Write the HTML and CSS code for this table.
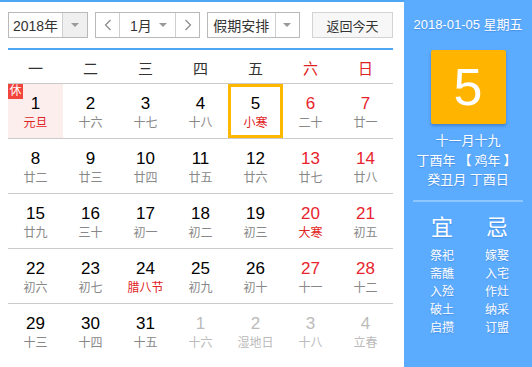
FILE: index.html
```html
<!DOCTYPE html>
<html lang="zh">
<head>
<meta charset="utf-8">
<link rel="stylesheet" href="styles.css">
</head>
<body>
<div class="app">
  <div class="main">
    <div class="toolbar">
      <div class="sel year">
        <span class="sel-text">2018年</span>
        <span class="sel-arrow gray"><i class="tri"></i></span>
      </div>
      <div class="sel month">
        <span class="nav"><svg width="8" height="12" viewBox="0 0 8 12"><polyline points="6.5,1 1.5,6 6.5,11" fill="none" stroke="#888" stroke-width="1.2"/></svg></span>
        <span class="month-mid"><span class="m-text">1月</span><i class="tri"></i></span>
        <span class="nav"><svg width="8" height="12" viewBox="0 0 8 12"><polyline points="1.5,1 6.5,6 1.5,11" fill="none" stroke="#888" stroke-width="1.2"/></svg></span>
      </div>
      <div class="sel holiday">
        <span class="sel-text">假期安排</span>
        <span class="sel-arrow"><i class="tri"></i></span>
      </div>
      <div class="btn">返回今天</div>
    </div>
    <div class="weekdays">
      <span>一</span><span>二</span><span>三</span><span>四</span><span>五</span><span class="red">六</span><span class="red">日</span>
    </div>
    <div class="grid">
      <div class="row">
        <div class="cell rest"><span class="badge">休</span><b>1</b><em class="fest">元旦</em></div>
        <div class="cell"><b>2</b><em>十六</em></div>
        <div class="cell"><b>3</b><em>十七</em></div>
        <div class="cell"><b>4</b><em>十八</em></div>
        <div class="cell today"><b>5</b><em class="fest">小寒</em></div>
        <div class="cell wk"><b>6</b><em>二十</em></div>
        <div class="cell wk"><b>7</b><em>廿一</em></div>
      </div>
      <div class="row">
        <div class="cell"><b>8</b><em>廿二</em></div>
        <div class="cell"><b>9</b><em>廿三</em></div>
        <div class="cell"><b>10</b><em>廿四</em></div>
        <div class="cell"><b>11</b><em>廿五</em></div>
        <div class="cell"><b>12</b><em>廿六</em></div>
        <div class="cell wk"><b>13</b><em>廿七</em></div>
        <div class="cell wk"><b>14</b><em>廿八</em></div>
      </div>
      <div class="row">
        <div class="cell"><b>15</b><em>廿九</em></div>
        <div class="cell"><b>16</b><em>三十</em></div>
        <div class="cell"><b>17</b><em>初一</em></div>
        <div class="cell"><b>18</b><em>初二</em></div>
        <div class="cell"><b>19</b><em>初三</em></div>
        <div class="cell wk"><b>20</b><em class="fest">大寒</em></div>
        <div class="cell wk"><b>21</b><em>初五</em></div>
      </div>
      <div class="row">
        <div class="cell"><b>22</b><em>初六</em></div>
        <div class="cell"><b>23</b><em>初七</em></div>
        <div class="cell"><b>24</b><em class="fest">腊八节</em></div>
        <div class="cell"><b>25</b><em>初九</em></div>
        <div class="cell"><b>26</b><em>初十</em></div>
        <div class="cell wk"><b>27</b><em>十一</em></div>
        <div class="cell wk"><b>28</b><em>十二</em></div>
      </div>
      <div class="row last">
        <div class="cell"><b>29</b><em>十三</em></div>
        <div class="cell"><b>30</b><em>十四</em></div>
        <div class="cell"><b>31</b><em>十五</em></div>
        <div class="cell other"><b>1</b><em>十六</em></div>
        <div class="cell other"><b>2</b><em>湿地日</em></div>
        <div class="cell other"><b>3</b><em>十八</em></div>
        <div class="cell other"><b>4</b><em>立春</em></div>
      </div>
    </div>
  </div>
  <div class="side">
    <div class="side-date">2018-01-05 星期五</div>
    <div class="big-day">5</div>
    <div class="lunar">
      <div>十一月十九</div>
      <div>丁酉年<span class="br">【</span>鸡年<span class="br">】</span></div>
      <div>癸丑月 丁酉日</div>
    </div>
    <div class="sep"></div>
    <div class="yj">
      <div class="yj-col">
        <div class="yj-title">宜</div>
        <div>祭祀</div><div>斋醮</div><div>入殓</div><div>破土</div><div>启攒</div>
      </div>
      <div class="yj-col">
        <div class="yj-title">忌</div>
        <div>嫁娶</div><div>入宅</div><div>作灶</div><div>纳采</div><div>订盟</div>
      </div>
    </div>
  </div>
</div>
</body>
</html>
```

FILE: styles.css
```css
* { box-sizing: border-box; margin: 0; padding: 0; }
html, body { background: #fff; }
body {
  font-family: "Liberation Sans", Arial, "Noto Sans CJK SC", sans-serif;
  color: #333;
  width: 532px;
  height: 367px;
  overflow: hidden;
}
.app {
  display: flex;
  height: 367px;
}
.main {
  width: 404px;
  border-top: 2px solid #4ea6f5;
  padding: 10px 11px 0 8px;
}
.toolbar {
  display: flex;
  align-items: stretch;
  height: 26px;
}
.sel {
  display: flex;
  border: 1px solid #b9b9b9;
  background: #fff;
  font-size: 13px;
  color: #333;
}
.sel-text {
  display: flex;
  align-items: center;
  justify-content: center;
  border-right: 1px solid #cfcfcf;
}
.sel-arrow {
  display: flex;
  align-items: center;
  justify-content: center;
  width: 24px;
}
.sel-arrow.gray { background: #efefef; }
.tri {
  display: block;
  width: 0;
  height: 0;
  border-left: 4px solid transparent;
  border-right: 4px solid transparent;
  border-top: 4px solid #999;
}
.year { width: 80px; font-size: 14px; }
.year .sel-text { width: 54px; }
.month { width: 105px; margin-left: 7px; }
.nav {
  width: 23px;
  display: flex;
  align-items: center;
  justify-content: center;
}
.month-mid {
  flex: 1;
  display: flex;
  align-items: center;
  justify-content: space-between;
  padding: 0 8px 0 10px;
  border-left: 1px solid #cfcfcf;
  border-right: 1px solid #cfcfcf;
  font-size: 14px;
}
.holiday { width: 93px; margin-left: 7px; font-size: 14px; }
.holiday .sel-text { width: 69px; }
.btn {
  width: 81px;
  margin-left: 12px;
  border: 1px solid #d3d3d3;
  background: #f7f7f7;
  display: flex;
  align-items: center;
  justify-content: center;
  font-size: 13px;
  color: #333;
}
.weekdays {
  margin-top: 10px;
  border-top: 2px solid #4ea6f5;
  border-bottom: 1px solid #cbcbcb;
  height: 36px;
  display: grid;
  grid-template-columns: repeat(7, 55px);
  align-items: center;
  font-size: 15px;
  color: #333;
}
.weekdays span { text-align: center; padding-top: 1px; }
.red { color: #e02424; }
.grid { display: flex; flex-direction: column; }
.row {
  display: grid;
  grid-template-columns: repeat(7, 55px);
  border-bottom: 1px solid #cbcbcb;
}
.row.last { border-bottom: none; }
.cell {
  position: relative;
  height: 54px;
  padding-top: 10px;
  display: flex;
  flex-direction: column;
  align-items: center;
}
.cell b {
  font-weight: normal;
  font-size: 17px;
  line-height: 20px;
  color: #000;
}
.cell em {
  font-style: normal;
  font-size: 12px;
  line-height: 19px;
  color: #888;
}
.cell.wk b { color: #e8242e; }
.cell em.fest { color: #e02424; }
.cell.other b, .cell.other em { color: #bbb; }
.cell.rest { background: #fdeeee; }
.badge {
  position: absolute;
  left: 0;
  top: 0;
  width: 15px;
  height: 15px;
  background: #f2453d;
  color: #fff;
  font-size: 12px;
  line-height: 15px;
  text-align: center;
}
.cell.today {
  border: 3px solid #ffb800;
  padding-top: 7px;
}
.side {
  width: 128px;
  height: 367px;
  background: #5babff;
  color: #fff;
  display: flex;
  flex-direction: column;
  align-items: center;
  text-shadow: 0 1px 1px rgba(20, 70, 140, 0.25);
}
.side-date {
  margin-top: 17px;
  font-size: 13px;
  line-height: 16px;
}
.big-day {
  margin-top: 17px;
  width: 75px;
  height: 74px;
  background: #ffb400;
  border-radius: 2px;
  box-shadow: 0 2px 3px rgba(0, 40, 110, 0.3);
  display: flex;
  align-items: center;
  justify-content: center;
  font-size: 52px;
  text-shadow: none;
}
.lunar {
  margin-top: 7px;
  font-size: 13px;
  line-height: 19.5px;
  text-align: center;
}
.br {
  display: inline-block;
  width: 13px;
  text-align: center;
  margin: 0 3px;
}
.sep {
  margin-top: 10px;
  width: 110px;
  height: 2px;
  background: #8ec6ff;
}
.yj {
  margin-top: 13px;
  display: grid;
  grid-template-columns: 55px 55px;
  padding-left: 3px;
}
.yj-col {
  display: flex;
  flex-direction: column;
  align-items: center;
  font-size: 12px;
  line-height: 18px;
}
.yj-col .yj-title {
  font-size: 22px;
  line-height: 26px;
  margin-bottom: 6px;
}
```
